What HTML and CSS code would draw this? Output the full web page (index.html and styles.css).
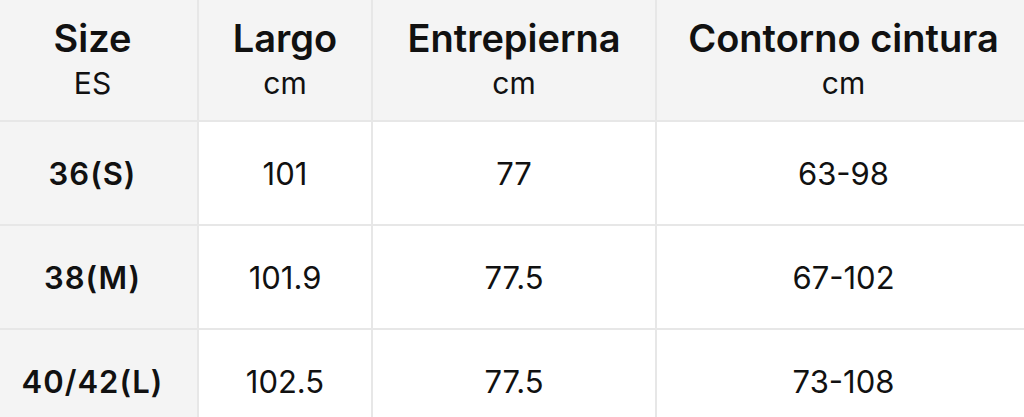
FILE: index.html
```html
<!DOCTYPE html>
<html lang="es">
<head>
<meta charset="utf-8">
<title>Tabla de tallas</title>
<link rel="stylesheet" href="styles.css">
</head>
<body>
<div class="table">
  <div class="cell head first"><span class="title">Size</span><span class="unit">ES</span></div>
  <div class="cell head"><span class="title">Largo</span><span class="unit">cm</span></div>
  <div class="cell head"><span class="title">Entrepierna</span><span class="unit">cm</span></div>
  <div class="cell head last"><span class="title">Contorno cintura</span><span class="unit">cm</span></div>

  <div class="cell size first">36(S)</div>
  <div class="cell">101</div>
  <div class="cell">77</div>
  <div class="cell last">63-98</div>

  <div class="cell size first">38(M)</div>
  <div class="cell">101.9</div>
  <div class="cell">77.5</div>
  <div class="cell last">67-102</div>

  <div class="cell size first">40/42(L)</div>
  <div class="cell">102.5</div>
  <div class="cell">77.5</div>
  <div class="cell last">73-108</div>
</div>
</body>
</html>
```
FILE: styles.css
```css
html, body {
  margin: 0;
  padding: 0;
  background: #ffffff;
}
body {
  font-family: Inter, "Liberation Sans", sans-serif;
  color: #111111;
  overflow: hidden;
}
.table {
  display: grid;
  grid-template-columns: 197px 172px 282px 1fr;
  grid-template-rows: 120px 102px 102px 102px;
  gap: 2px;
  background: #e7e7e7;
  width: 1024px;
}
.cell {
  background: #ffffff;
  display: flex;
  flex-direction: column;
  align-items: center;
  justify-content: center;
  font-size: 31px;
  font-weight: 400;
}
.first {
  padding-right: 12px;
}
.last {
  padding-left: 6px;
}
.head {
  background: #f4f4f4;
  padding-top: 0;
}
.title {
  font-size: 38px;
  font-weight: 600;
  line-height: 46px;
}
.unit {
  font-size: 30px;
  line-height: 44px;
}
.size {
  background: #f4f4f4;
  font-weight: 600;
  letter-spacing: 1px;
}
```
